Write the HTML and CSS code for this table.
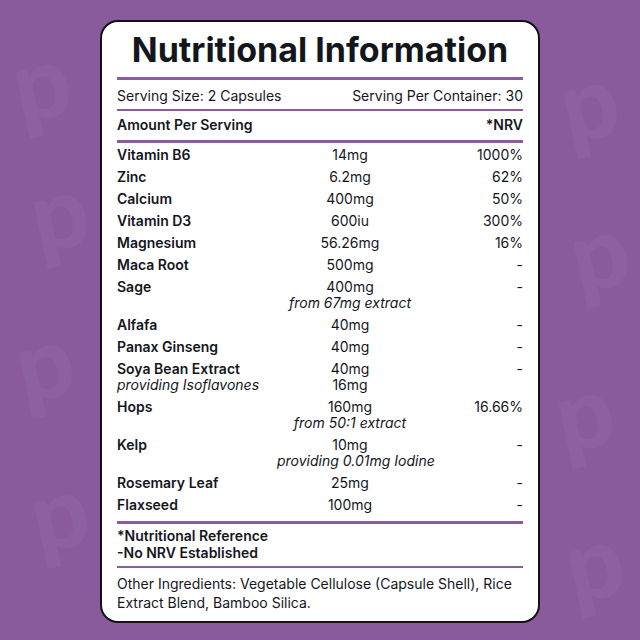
FILE: index.html
```html
<!DOCTYPE html>
<html>
<head>
<meta charset="utf-8">
<link rel="stylesheet" href="styles.css">
</head>
<body>
<div class="bg">
  <span class="wm wm1">p</span>
  <span class="wm wm2">p</span>
  <span class="wm wm3">p</span>
  <span class="wm wm4">p</span>
  <span class="wm wm5">p</span>
  <span class="wm wm6">p</span>
  <span class="wm wm7">p</span>
  <span class="wm wm8">p</span>
</div>
<main class="card">
  <h1 class="title">Nutritional Information</h1>
  <div class="rule thick"></div>
  <div class="serving">
    <span>Serving Size: 2 Capsules</span>
    <span>Serving Per Container: 30</span>
  </div>
  <div class="rule thin"></div>
  <div class="head">
    <span>Amount Per Serving</span>
    <span>*NRV</span>
  </div>
  <div class="rule thick"></div>
  <div class="rows">
    <div class="row"><div class="name">Vitamin B6</div><div class="amt">14mg</div><div class="nrv">1000%</div></div>
    <div class="row"><div class="name">Zinc</div><div class="amt">6.2mg</div><div class="nrv">62%</div></div>
    <div class="row"><div class="name">Calcium</div><div class="amt">400mg</div><div class="nrv">50%</div></div>
    <div class="row"><div class="name">Vitamin D3</div><div class="amt">600iu</div><div class="nrv">300%</div></div>
    <div class="row"><div class="name">Magnesium</div><div class="amt">56.26mg</div><div class="nrv">16%</div></div>
    <div class="row"><div class="name">Maca Root</div><div class="amt">500mg</div><div class="nrv">-</div></div>
    <div class="row"><div class="name">Sage</div><div class="amt">400mg<br><em>from 67mg extract</em></div><div class="nrv">-</div></div>
    <div class="row"><div class="name">Alfafa</div><div class="amt">40mg</div><div class="nrv">-</div></div>
    <div class="row"><div class="name">Panax Ginseng</div><div class="amt">40mg</div><div class="nrv">-</div></div>
    <div class="row"><div class="name">Soya Bean Extract<br><em>providing Isoflavones</em></div><div class="amt">40mg<br>16mg</div><div class="nrv">-</div></div>
    <div class="row"><div class="name">Hops</div><div class="amt">160mg<br><em>from 50:1 extract</em></div><div class="nrv">16.66%</div></div>
    <div class="row"><div class="name">Kelp</div><div class="amt">10mg<br><em>providing 0.01mg Iodine</em></div><div class="nrv">-</div></div>
    <div class="row"><div class="name">Rosemary Leaf</div><div class="amt">25mg</div><div class="nrv">-</div></div>
    <div class="row"><div class="name">Flaxseed</div><div class="amt">100mg</div><div class="nrv">-</div></div>
  </div>
  <div class="rule thick low"></div>
  <div class="notes">
    <div>*Nutritional Reference</div>
    <div>-No NRV Established</div>
  </div>
  <div class="rule thin"></div>
  <p class="other">Other Ingredients: Vegetable Cellulose (Capsule Shell), Rice Extract Blend, Bamboo Silica.</p>
</main>
</body>
</html>
```
FILE: styles.css
```css
html, body {
  margin: 0;
  padding: 0;
}
body {
  width: 640px;
  height: 640px;
  background: #8a5b9c;
  overflow: hidden;
  position: relative;
  font-family: "Inter", "Lato", sans-serif;
  color: #15161c;
}
.bg {
  position: absolute;
  inset: 0;
  overflow: hidden;
}
.wm {
  position: absolute;
  font-family: "Lato", sans-serif;
  font-weight: 900;
  font-size: 100px;
  line-height: 1;
  color: rgba(255, 255, 255, 0.03);
  transform: rotate(-12deg);
}
.wm1 { left: 12px; top: 30px; }
.wm2 { left: 30px; top: 160px; }
.wm3 { left: 15px; top: 310px; }
.wm4 { left: 30px; top: 460px; }
.wm5 { left: 560px; top: 50px; }
.wm6 { left: 570px; top: 200px; }
.wm7 { left: 555px; top: 360px; }
.wm8 { left: 565px; top: 510px; }

.card {
  position: relative;
  width: 406px;
  margin: 20px auto 0;
  background: #fff;
  border: 2px solid #121214;
  border-radius: 18px;
  padding: 9px 15px 9px;
}
.title {
  margin: 0;
  text-align: center;
  font-weight: 700;
  font-size: 34px;
  line-height: 38px;
  letter-spacing: 0;
  color: #14161d;
  white-space: nowrap;
}
.rule {
  background: #8d5ba0;
}
.rule.thick {
  height: 3px;
}
.rule.thin {
  height: 2px;
}
.title + .rule {
  margin-top: 8px;
}
.serving {
  display: flex;
  justify-content: space-between;
  font-size: 14px;
  line-height: 20px;
  margin: 6px 0 3px;
}
.head {
  display: flex;
  justify-content: space-between;
  font-size: 14px;
  font-weight: 600;
  line-height: 20px;
  margin: 4px 0 5px;
}
.rows {
  display: flex;
  flex-direction: column;
  gap: 6px;
  margin-top: 4px;
  font-size: 14px;
  line-height: 16px;
}
.row {
  display: grid;
  grid-template-columns: 160px 146px 1fr;
}
.name {
  font-weight: 600;
  white-space: nowrap;
}
.name em {
  font-weight: 400;
}
.amt {
  text-align: center;
  white-space: nowrap;
}
.nrv {
  text-align: right;
}
em {
  font-style: italic;
}
.rule.low {
  margin-top: 8px;
}
.notes {
  font-size: 14px;
  font-weight: 600;
  line-height: 17px;
  margin: 3px 0 5px;
}
.other {
  margin: 6px 0 0;
  font-size: 14px;
  line-height: 19px;
}
```
